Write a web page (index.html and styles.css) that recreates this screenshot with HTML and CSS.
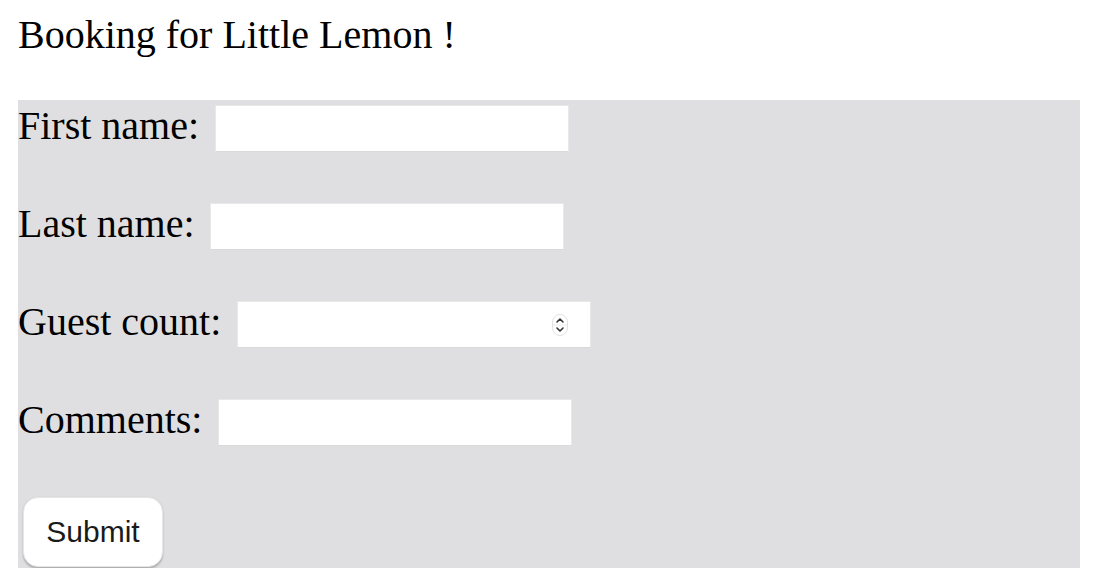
FILE: index.html
```html
<!DOCTYPE html>
<html lang="en">
<head>
<meta charset="utf-8">
<title>Booking for Little Lemon</title>
<link rel="stylesheet" href="styles.css">
</head>
<body>
<div class="title">Booking for Little Lemon !</div>
<form class="booking">
  <div class="row">
    <label class="label" for="first">First name:</label>
    <input class="field" id="first" type="text">
  </div>
  <div class="row">
    <label class="label" for="last">Last name:</label>
    <input class="field" id="last" type="text">
  </div>
  <div class="row">
    <label class="label" for="guests">Guest count:</label>
    <div class="number-wrap">
      <input class="field number" id="guests" type="number">
      <span class="spinner" aria-hidden="true">
        <svg width="16" height="22" viewBox="0 0 16 22">
          <rect x="0.5" y="0.5" width="15" height="21" rx="7.5" ry="7.5" fill="#fff" stroke="#e2e2e2"/>
          <line x1="1" y1="11" x2="15" y2="11" stroke="#ececec"/>
          <path d="M5 8 L8 5 L11 8" fill="none" stroke="#333" stroke-width="1.6" stroke-linecap="round" stroke-linejoin="round"/>
          <path d="M5 14 L8 17 L11 14" fill="none" stroke="#333" stroke-width="1.6" stroke-linecap="round" stroke-linejoin="round"/>
        </svg>
      </span>
    </div>
  </div>
  <div class="row">
    <label class="label" for="comments">Comments:</label>
    <input class="field" id="comments" type="text">
  </div>
  <div class="actions">
    <button class="submit" type="button">Submit</button>
  </div>
</form>
</body>
</html>
```

FILE: styles.css
```css
html, body {
  margin: 0;
  padding: 0;
  background: #ffffff;
}

body {
  font-family: "Liberation Serif", "Times New Roman", serif;
  color: #000;
  padding: 0 20px 0 18px;
}

.title {
  margin-top: 12px;
  font-size: 40px;
  line-height: 46px;
  height: 46px;
}

.booking {
  margin-top: 42px;
  background: #dfdfe1;
  display: flex;
  flex-direction: column;
  gap: 51px;
  padding: 5px 0 1px 0;
}

.row {
  display: flex;
  align-items: flex-start;
  gap: 15.5px;
  height: 47px;
}

.actions {
  display: flex;
}

.label {
  font-size: 40px;
  line-height: 40px;
  padding-top: 0.5px;
  white-space: nowrap;
}

.field {
  box-sizing: border-box;
  width: 354px;
  height: 47px;
  margin: 0;
  background: #fff;
  border: 1px solid #e8e8e8;
  border-bottom-color: #d9d9d9;
  border-radius: 0;
  outline: none;
  font-size: 26px;
  padding: 0 8px;
}

.number-wrap {
  position: relative;
  width: 354px;
  height: 47px;
}

.number {
  -moz-appearance: textfield;
  appearance: textfield;
}

.number::-webkit-outer-spin-button,
.number::-webkit-inner-spin-button {
  -webkit-appearance: none;
  margin: 0;
}

.spinner {
  position: absolute;
  right: 23px;
  top: 13px;
  width: 16px;
  height: 22px;
  display: block;
}

.spinner svg {
  display: block;
}

.submit {
  box-sizing: border-box;
  margin: 0 0 0 5px;
  width: 140px;
  height: 70px;
  background: #fff;
  border: 1px solid #e6e6e6;
  border-radius: 15px;
  box-shadow: 0 1.5px 2px rgba(0, 0, 0, 0.22);
  font-family: "Liberation Sans", Arial, sans-serif;
  font-size: 30px;
  color: #1a1a1a;
  padding: 0;
  cursor: pointer;
}
```
